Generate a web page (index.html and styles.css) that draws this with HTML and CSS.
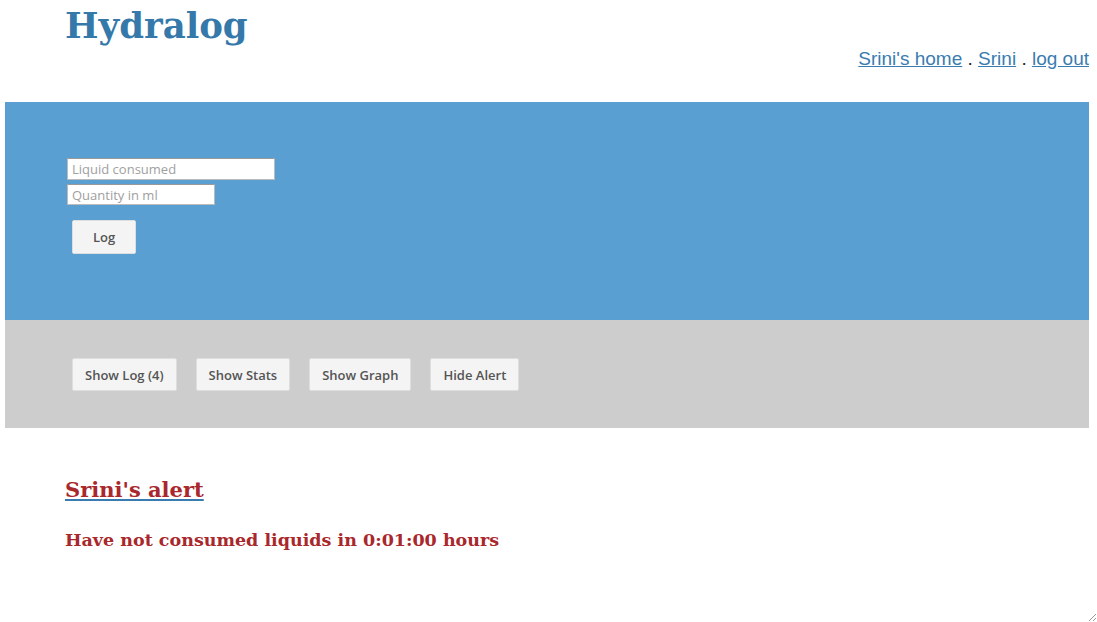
FILE: index.html
```html
<!DOCTYPE html>
<html>
<head>
<meta charset="utf-8">
<link rel="stylesheet" href="styles.css">
</head>
<body>
<header class="top">
  <h1 class="brand">Hydralog</h1>
  <nav class="usernav">
    <a href="#">Srini's home</a> . <a href="#">Srini</a> . <a href="#">log out</a>
  </nav>
</header>
<section class="logband">
  <form class="logform">
    <input class="field field-liquid" type="text" placeholder="Liquid consumed">
    <input class="field field-qty" type="text" placeholder="Quantity in ml">
    <button type="button" class="btn btn-log">Log</button>
  </form>
</section>
<section class="actions">
  <button type="button" class="btn">Show Log (4)</button>
  <button type="button" class="btn">Show Stats</button>
  <button type="button" class="btn">Show Graph</button>
  <button type="button" class="btn">Hide Alert</button>
</section>
<section class="alert">
  <h2 class="alert-title"><a href="#">Srini's alert</a></h2>
  <p class="alert-msg">Have not consumed liquids in 0:01:00 hours</p>
</section>
<svg class="grip" width="10" height="10" viewBox="0 0 10 10">
  <line x1="2" y1="9" x2="9" y2="2" stroke="#999" stroke-width="1"/>
  <line x1="6" y1="9" x2="9" y2="6" stroke="#999" stroke-width="1"/>
</svg>
</body>
</html>
```
FILE: styles.css
```css
html, body {
  margin: 0;
  padding: 0;
  background: #fff;
}
body {
  padding: 0 8px 0 5px;
  min-height: 622px;
  box-sizing: border-box;
  position: relative;
  font-family: "Liberation Sans", Arial, sans-serif;
}
.top {
  height: 102px;
  display: flex;
  flex-direction: column;
}
.brand {
  margin: 0;
  padding: 6px 0 0 60px;
  font-family: "DejaVu Serif", Georgia, serif;
  font-weight: bold;
  font-size: 35.5px;
  line-height: 40px;
  color: #3579aa;
}
.usernav {
  align-self: flex-end;
  margin-top: 2px;
  font-size: 19px;
  line-height: 22px;
  color: #222;
}
.usernav a {
  color: #3a7cb0;
  text-decoration: underline;
}
.logband {
  background: #5a9fd1;
  height: 218px;
  padding: 56px 0 0 62px;
  box-sizing: border-box;
}
.logform {
  display: flex;
  flex-direction: column;
  align-items: flex-start;
  gap: 4px;
}
.field {
  box-sizing: border-box;
  height: 22px;
  margin: 0;
  border: 1px solid #bbb;
  border-top-color: #999;
  background: #fff;
  padding: 0 4px;
  font-family: "Open Sans", "DejaVu Sans", sans-serif;
  font-size: 13px;
  color: #333;
}
.field::placeholder {
  color: #a0a0a0;
}
.field-liquid { width: 208px; }
.field-qty { width: 148px; height: 21px; }
.btn {
  box-sizing: border-box;
  height: 33px;
  margin: 0;
  padding: 0 12px;
  background: #f4f4f4;
  border: 1px solid #dedede;
  border-radius: 2px;
  font-family: "Open Sans", "DejaVu Sans", sans-serif;
  font-weight: 600;
  font-size: 13px;
  color: #555;
}
.btn-log {
  margin: 11px 0 0 5px;
  width: 64px;
  height: 34px;
}
.actions {
  background: #cdcdcd;
  height: 108px;
  box-sizing: border-box;
  padding: 38px 0 0 67px;
  display: flex;
  align-items: flex-start;
  gap: 19px;
}
.alert {
  padding: 46px 0 0 60px;
  font-family: "DejaVu Serif", Georgia, serif;
  color: #a8282c;
}
.alert-title {
  margin: 0;
  font-size: 21px;
  line-height: 32px;
  font-weight: bold;
}
.alert-title a {
  color: #a8282c;
  text-decoration: underline;
  text-decoration-color: #3a7cb0;
}
.alert-msg {
  margin: 22px 0 0;
  font-size: 17.5px;
  line-height: 24px;
  font-weight: bold;
}
.grip {
  position: absolute;
  right: 0;
  bottom: 0;
}
```
